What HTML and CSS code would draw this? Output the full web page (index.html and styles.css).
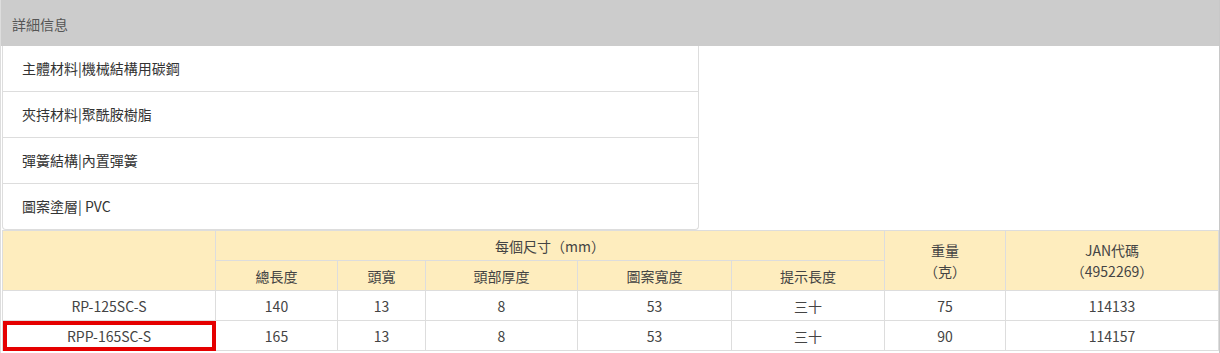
FILE: index.html
```html
<!DOCTYPE html>
<html lang="zh-Hant">
<head>
    <meta charset="UTF-8">
    <meta name="viewport" content="width=device-width, initial-scale=1.0">
    <title>詳細信息</title>
    <link rel="stylesheet" href="styles.css">
</head>
<body>
    <div class="panel">
        <div class="panel-title">詳細信息</div>

        <!-- Material list -->
        <ul class="spec-list">
            <li>主體材料|機械結構用碳鋼</li>
            <li>夾持材料|聚酰胺樹脂</li>
            <li>彈簧結構|內置彈簧</li>
            <li>圖案塗層| PVC</li>
        </ul>

        <!-- Size table -->
        <table class="size-table">
            <colgroup>
                <col class="c-model">
                <col class="c-len">
                <col class="c-head">
                <col class="c-thick">
                <col class="c-pattern">
                <col class="c-hint">
                <col class="c-weight">
                <col class="c-jan">
            </colgroup>
            <thead>
                <tr>
                    <th rowspan="2"></th>
                    <th colspan="5">每個尺寸（mm）</th>
                    <th rowspan="2" class="two-line">重量<br>（克）</th>
                    <th rowspan="2" class="two-line">JAN代碼<br>（4952269）</th>
                </tr>
                <tr>
                    <th>總長度</th>
                    <th>頭寬</th>
                    <th>頭部厚度</th>
                    <th>圖案寬度</th>
                    <th>提示長度</th>
                </tr>
            </thead>
            <tbody>
                <tr>
                    <td>RP-125SC-S</td>
                    <td>140</td>
                    <td>13</td>
                    <td>8</td>
                    <td>53</td>
                    <td>三十</td>
                    <td>75</td>
                    <td>114133</td>
                </tr>
                <tr>
                    <td class="marked">RPP-165SC-S</td>
                    <td>165</td>
                    <td>13</td>
                    <td>8</td>
                    <td>53</td>
                    <td>三十</td>
                    <td>90</td>
                    <td>114157</td>
                </tr>
            </tbody>
        </table>
    </div>
</body>
</html>
```

FILE: styles.css
```css
body {
    margin: 0;
    font-family: "Noto Sans CJK TC", "Noto Sans", sans-serif;
    font-size: 14px;
    color: #333;
    background-color: #fff;
    /* keep full-width brackets full width */
    text-spacing-trim: space-all;
    font-feature-settings: "chws" 0, "halt" 0;
}

.panel {
    width: 1220px;
    box-sizing: border-box;
    border-left: 1px solid #ddd;
    border-right: 1px solid #c8c8c8;
    padding: 0 1px 0 1px;
    min-height: 353px;
}

.panel-title {
    height: 46px;
    box-sizing: border-box;
    margin: 0 -1px;
    padding: 2px 0 0 11px;
    line-height: 44px;
    background-color: #ccc;
    color: #555;
    font-size: 14px;
}

.spec-list {
    list-style: none;
    margin: 0;
    padding: 0;
    width: 697px;
    box-sizing: border-box;
    border: 1px solid #ddd;
    border-top: none;
    border-radius: 0 0 4px 4px;
}

.spec-list li {
    height: 45px;
    line-height: 45px;
    padding-left: 19px;
    color: #333;
}

.spec-list li + li {
    border-top: 1px solid #ddd;
}

.size-table {
    width: 1216px;
    table-layout: fixed;
    border-collapse: collapse;
    color: #444;
}

.c-model { width: 213px; }
.c-len { width: 122px; }
.c-head { width: 88px; }
.c-thick { width: 152px; }
.c-pattern { width: 154px; }
.c-hint { width: 153px; }
.c-weight { width: 121px; }
.c-jan { width: 213px; }

.size-table th,
.size-table td {
    height: 29px;
    padding: 0;
    border: 1px solid #ddd;
    text-align: center;
    vertical-align: middle;
    font-weight: normal;
}

.size-table th {
    background-color: #feedbe;
}

.size-table th.two-line {
    line-height: 21px;
}

/* highlighted model cell */
.size-table td.marked {
    outline: 4px solid #e50000;
    outline-offset: -4px;
}
```
